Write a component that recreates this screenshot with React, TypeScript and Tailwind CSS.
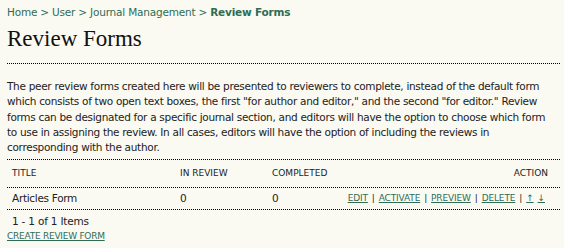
import React from "react";

const dotted = "border-b border-dotted border-black";

export default function App() {
  const link = "text-[#2f6c56] underline";
  return (
    <div className="w-[564px] h-[248px] bg-[#fbfaf2] text-[#222] overflow-hidden" style={{ fontFamily: '"DejaVu Sans", Verdana, sans-serif' }}>
      <div className="pl-[7px] pr-[4px] pt-[5px]">
        <div className="text-[10.5px] leading-[14px] tracking-[-0.2px] text-[#2f6c56]">
          Home &gt; User &gt; Journal Management &gt; <span className="font-bold">Review Forms</span>
        </div>
        <h1 className={`text-[23px] leading-[28px] mt-[6px] pb-[10px] text-[#111] ${dotted}`} style={{ fontFamily: '"Liberation Serif", Georgia, serif' }}>
          Review Forms
        </h1>
        <p className="text-[10.5px] leading-[15.3px] tracking-[-0.3px] mt-[15px] pb-[4px] mr-[4px]">
          The peer review forms created here will be presented to reviewers to complete, instead of the default form which consists of two open text boxes, the first "for author and editor," and the second "for editor." Review forms can be designated for a specific journal section, and editors will have the option to choose which form to use in assigning the review. In all cases, editors will have the option of including the reviews in corresponding with the author.
        </p>
        <div className="border-t border-dotted border-black" />
        <div className={`grid grid-cols-[168px_92px_1fr_auto] items-center text-[9px] h-[28px] px-[5px] ${dotted}`}>
          <div>TITLE</div>
          <div>IN REVIEW</div>
          <div>COMPLETED</div>
          <div className="pr-[7px]">ACTION</div>
        </div>
        <div className={`grid grid-cols-[168px_92px_1fr_auto] items-center text-[10.5px] tracking-[-0.3px] h-[22px] px-[5px] ${dotted}`}>
          <div>Articles Form</div>
          <div>0</div>
          <div>0</div>
          <div className="text-[9px] tracking-[-0.15px] pr-[10px] flex items-center gap-[4px]">
            <a className={link}>EDIT</a>
            <span>|</span>
            <a className={link}>ACTIVATE</a>
            <span>|</span>
            <a className={link}>PREVIEW</a>
            <span>|</span>
            <a className={link}>DELETE</a>
            <span>|</span>
            <a className={link}>↑</a>
            <a className={link}>↓</a>
          </div>
        </div>
        <div className="text-[10.5px] tracking-[-0.2px] leading-[14px] mt-[4px] pl-[5px]">1 - 1 of 1 Items</div>
        <div className="text-[9px] tracking-[-0.25px] leading-[12px] mt-[2px]">
          <a className={link}>CREATE REVIEW FORM</a>
        </div>
      </div>
    </div>
  );
}
